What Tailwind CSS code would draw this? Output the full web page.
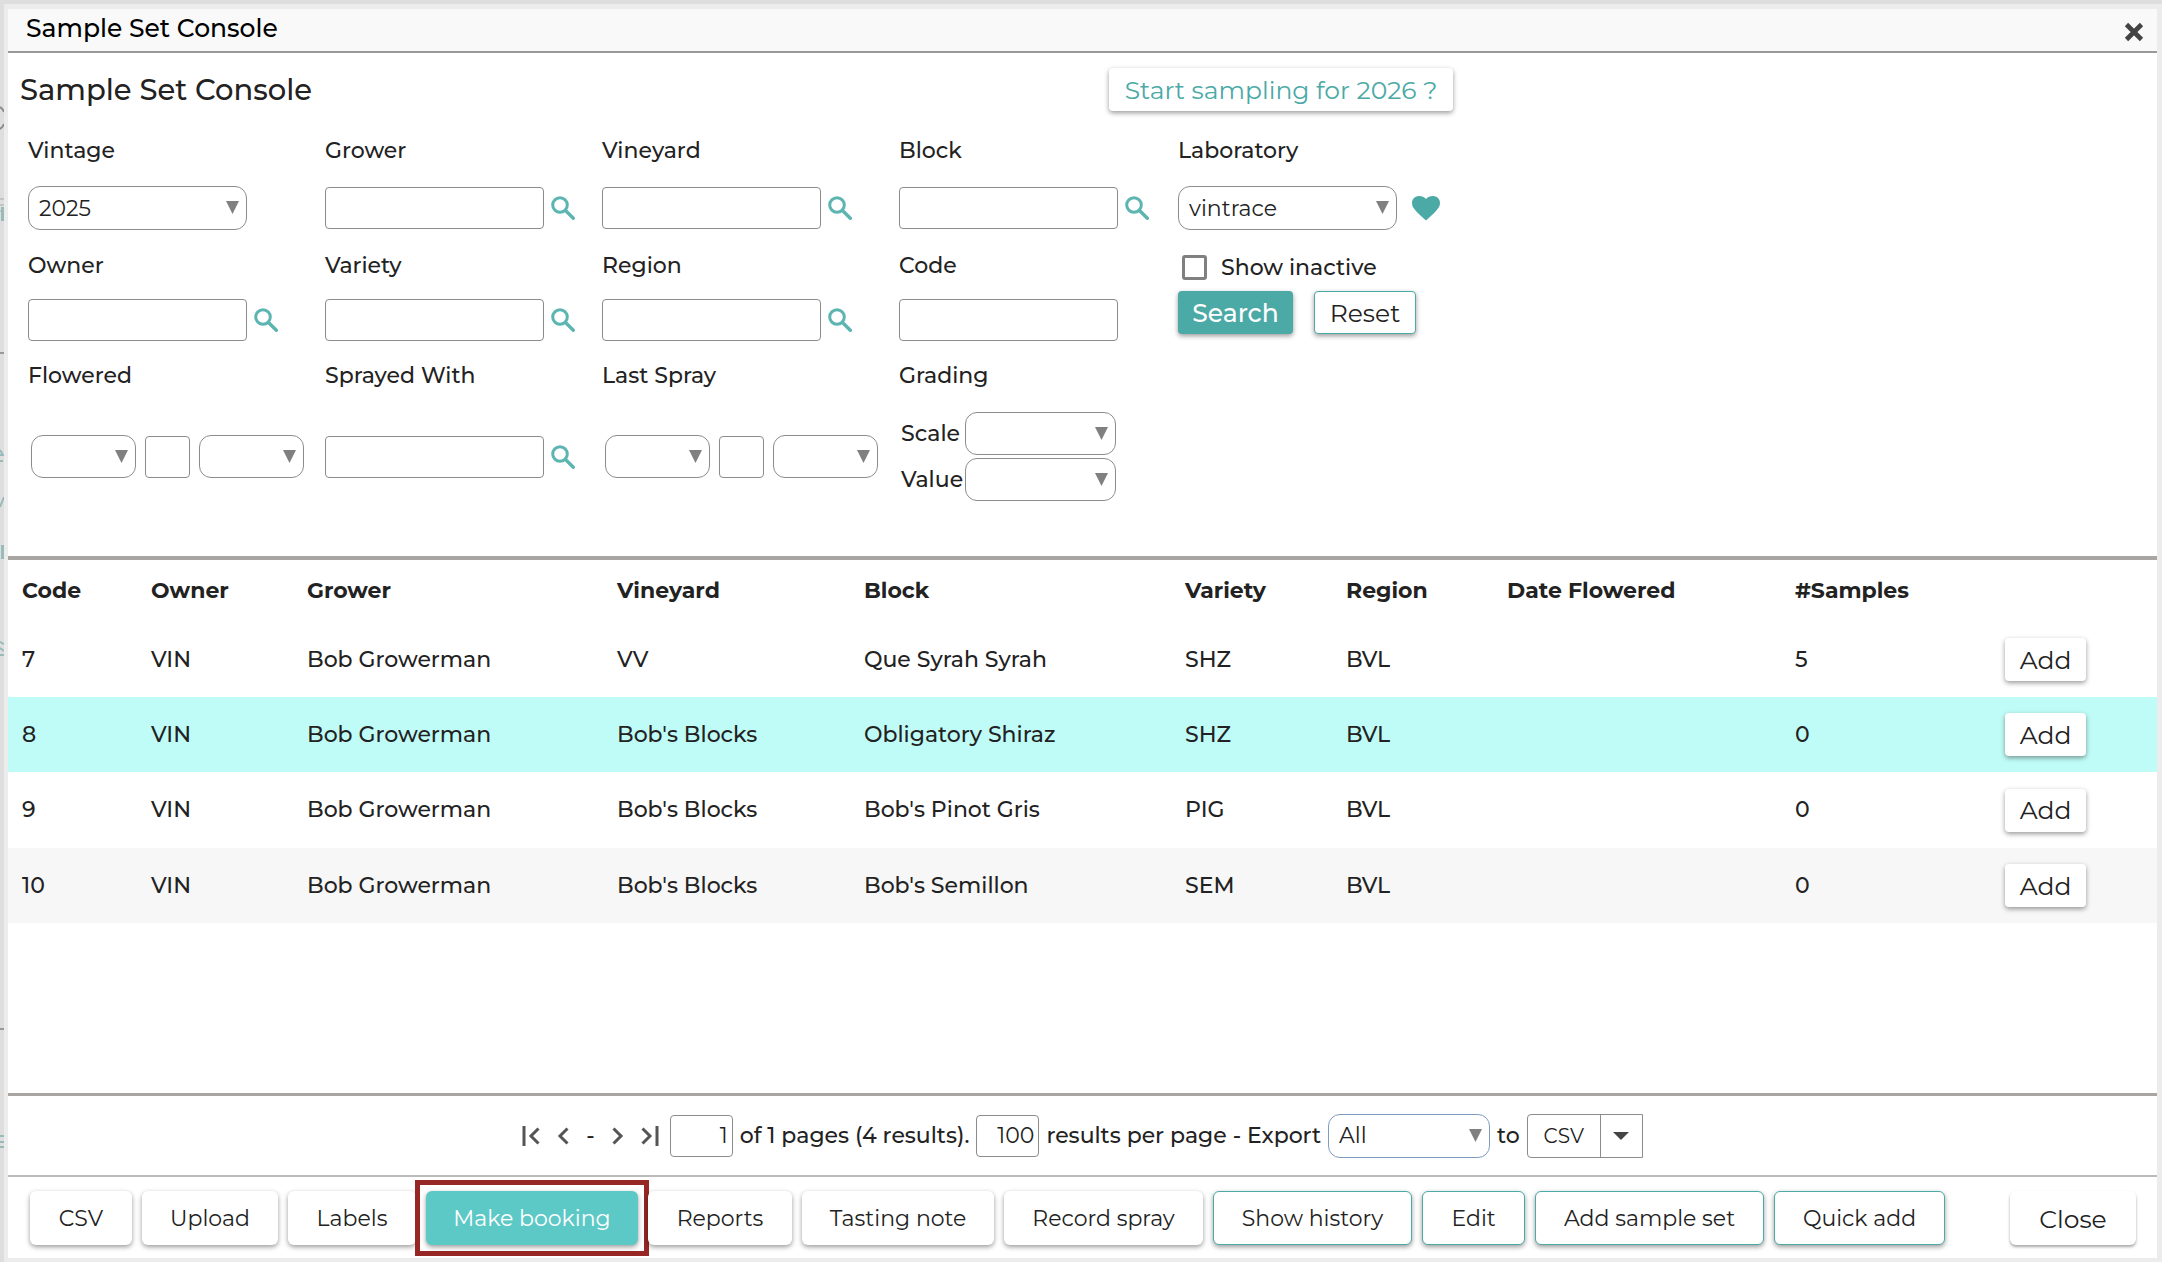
<!DOCTYPE html>
<html lang="en">
<head>
  <meta charset="UTF-8" />
  <meta name="viewport" content="width=device-width, initial-scale=1.0"/>
  <title>Sample Set Console</title>
  <script src="https://cdn.jsdelivr.net/npm/@tailwindcss/browser@4"></script>
</head>
<body class="relative h-screen overflow-hidden bg-[#dedede] font-['Montserrat','Inter',sans-serif] text-[22px] leading-7 font-medium text-[#222]">

  <!-- Shared icons -->
  <svg class="hidden">
    <symbol id="search" viewBox="0 0 24 24">
      <circle cx="9" cy="9" r="7.3" fill="none" stroke="#5cb5b1" stroke-width="3"/>
      <path d="M14.5 14.5L22.3 22.3" stroke="#5cb5b1" stroke-width="3.4" stroke-linecap="round"/>
    </symbol>
    <symbol id="arrow" viewBox="0 0 13 13"><path d="M0 0H13L6.5 13Z" fill="#808080"/></symbol>
  </svg>

  <!-- Edge of the page behind the dialog -->
  <svg class="absolute top-0 left-0 h-[1262px] w-1" viewBox="0 0 4 1262" fill="none" aria-hidden="true">
    <path d="M0 107Q3 109 4 112M0 129Q3 127 4 124" stroke="#8a8a8a" stroke-width="2"/>
    <path d="M0 199H4M0 205H4M0 211H4" stroke="#aaa"/>
    <path d="M0 353H4" stroke="#999" stroke-width="2"/>
    <path d="M0 450L3 455H0M0 461H3M0 507L4 497M0 642L4 644M0 648L4 651M0 655H4M0 1136H4M0 1142H4M0 1147H4" stroke="#98bbb9" stroke-width="2"/>
    <path d="M1 207H4V221H1ZM1 545H4V559H1Z" fill="#98bbb9"/>
    <path d="M0 1029H4" stroke="#999" stroke-width="2"/>
  </svg>

  <!-- Dialog -->
  <div class="flex h-full flex-col border-t-4 border-l-4 border-transparent">
  <div class="flex min-h-0 grow flex-col border-4 border-t-5 border-r-5 border-[#ececec] bg-white">

    <header class="flex h-11 shrink-0 items-center justify-between border-b-2 border-[#999] bg-[#f9f9f9] pr-3 pl-[18px]">
      <span class="pb-1 text-[25px] leading-8 text-black">Sample Set Console</span>
      <button type="button" aria-label="Close dialog" class="mt-1">
        <svg class="size-[22px]" viewBox="0 0 22 22"><path d="M3.500 3.500L18.500 18.500M18.500 3.500L3.500 18.500" stroke="#444" stroke-width="4.600"/></svg>
      </button>
    </header>

    <!-- Filters -->
    <form class="h-[503px] shrink-0 pt-[15px] pl-5">
      <div class="grid grid-cols-[1081px_auto] justify-start">
        <h1 class="-ml-2 text-[29px] leading-[43px]">Sample Set Console</h1>
        <button type="button" class="h-[43px] w-[344px] rounded bg-white text-[25px] font-normal text-[#4ba9a6] shadow-[0_2px_5px_rgba(0,0,0,0.4)]">Start sampling for 2026 ?</button>
      </div>

      <div class="mt-[26px] grid grid-cols-[297px_277px_297px_279px_auto] grid-rows-[115px_110px_140px] justify-start">
        <div>
          <label for="vintage" class="block">Vintage</label>
          <div class="relative mt-[21px] w-[219px]">
            <select id="vintage" class="h-11 w-full appearance-none rounded-xl border border-[#8c8c8c] bg-white px-[10px] pt-px font-normal"><option>2025</option></select>
            <svg class="pointer-events-none absolute top-[15px] right-2 size-[13px]"><use href="#arrow"/></svg>
          </div>
        </div>
        <div>
          <label for="grower" class="block">Grower</label>
          <div class="mt-[21px] flex h-11 items-center gap-[7px]">
            <input id="grower" type="text" class="h-[42px] w-[219px] rounded border border-[#8c8c8c] px-2">
            <button type="button" aria-label="Find grower"><svg class="size-6"><use href="#search"/></svg></button>
          </div>
        </div>
        <div>
          <label for="vineyard" class="block">Vineyard</label>
          <div class="mt-[21px] flex h-11 items-center gap-[7px]">
            <input id="vineyard" type="text" class="h-[42px] w-[219px] rounded border border-[#8c8c8c] px-2">
            <button type="button" aria-label="Find vineyard"><svg class="size-6"><use href="#search"/></svg></button>
          </div>
        </div>
        <div>
          <label for="block" class="block">Block</label>
          <div class="mt-[21px] flex h-11 items-center gap-[7px]">
            <input id="block" type="text" class="h-[42px] w-[219px] rounded border border-[#8c8c8c] px-2">
            <button type="button" aria-label="Find block"><svg class="size-6"><use href="#search"/></svg></button>
          </div>
        </div>
        <div>
          <label for="laboratory" class="block">Laboratory</label>
          <div class="mt-[21px] flex items-center gap-[14px]">
            <div class="relative w-[219px]">
              <select id="laboratory" class="h-11 w-full appearance-none rounded-xl border border-[#8c8c8c] bg-white px-[10px] pt-px font-normal"><option>vintrace</option></select>
              <svg class="pointer-events-none absolute top-[15px] right-2 size-[13px]"><use href="#arrow"/></svg>
            </div>
            <button type="button" aria-label="Favourite laboratory">
              <svg class="h-[26px] w-[30px]" viewBox="0 0 30 26"><path d="M15 25.5L12.8 23.5C5 16.5 1 12.8 1 8.1C1 4 4 1 8 1C11 1 13.5 2 15 4C16.5 2 19 1 22 1C26 1 29 4 29 8.1C29 12.8 25 16.5 17.200 23.500Z" fill="#4ba9a6"/></svg>
            </button>
          </div>
        </div>

        <div>
          <label for="owner" class="block">Owner</label>
          <div class="mt-[18px] flex h-11 items-center gap-[7px]">
            <input id="owner" type="text" class="h-[42px] w-[219px] rounded border border-[#8c8c8c] px-2">
            <button type="button" aria-label="Find owner"><svg class="size-6"><use href="#search"/></svg></button>
          </div>
        </div>
        <div>
          <label for="variety" class="block">Variety</label>
          <div class="mt-[18px] flex h-11 items-center gap-[7px]">
            <input id="variety" type="text" class="h-[42px] w-[219px] rounded border border-[#8c8c8c] px-2">
            <button type="button" aria-label="Find variety"><svg class="size-6"><use href="#search"/></svg></button>
          </div>
        </div>
        <div>
          <label for="region" class="block">Region</label>
          <div class="mt-[18px] flex h-11 items-center gap-[7px]">
            <input id="region" type="text" class="h-[42px] w-[219px] rounded border border-[#8c8c8c] px-2">
            <button type="button" aria-label="Find region"><svg class="size-6"><use href="#search"/></svg></button>
          </div>
        </div>
        <div>
          <label for="code" class="block">Code</label>
          <div class="mt-[18px] flex h-11 items-center">
            <input id="code" type="text" class="h-[42px] w-[219px] rounded border border-[#8c8c8c] px-2">
          </div>
        </div>
        <div>
          <div class="flex h-[31px] items-center gap-[14px] pl-1">
            <input id="inactive" type="checkbox" class="size-[25px] appearance-none rounded-[3px] border-3 border-[#808080] bg-white checked:bg-[#4ba9a6]">
            <label for="inactive">Show inactive</label>
          </div>
          <div class="mt-2 flex gap-[21px] text-[25px]">
            <button type="submit" class="h-[43px] w-[115px] rounded bg-[#4ba9a6] font-medium text-white shadow-[0_2px_5px_rgba(0,0,0,0.4)]">Search</button>
            <button type="reset" class="h-[43px] w-[102px] rounded border border-[#4ba9a6] bg-white font-normal shadow-[0_2px_5px_rgba(0,0,0,0.4)]">Reset</button>
          </div>
        </div>

        <div>
          <label for="flowered-day" class="block">Flowered</label>
          <div class="mt-[22px] ml-[3px] flex h-[89px] items-center gap-[9px]">
            <div class="relative w-[105px]">
              <select id="flowered-day" class="block h-[43px] w-full appearance-none rounded-xl border border-[#8c8c8c] bg-white px-2"><option></option></select>
              <svg class="pointer-events-none absolute top-[15px] right-2 size-[13px]"><use href="#arrow"/></svg>
            </div>
            <input type="text" aria-label="Flowered date" class="h-[42px] w-[45px] rounded border border-[#8c8c8c] px-1">
            <div class="relative w-[105px]">
              <select aria-label="Flowered month" class="block h-[43px] w-full appearance-none rounded-xl border border-[#8c8c8c] bg-white px-2"><option></option></select>
              <svg class="pointer-events-none absolute top-[15px] right-2 size-[13px]"><use href="#arrow"/></svg>
            </div>
          </div>
        </div>
        <div>
          <label for="sprayed" class="block">Sprayed With</label>
          <div class="mt-[22px] flex h-[89px] items-center gap-[7px]">
            <input id="sprayed" type="text" class="h-[42px] w-[219px] rounded border border-[#8c8c8c] px-2">
            <button type="button" aria-label="Find spray"><svg class="size-6"><use href="#search"/></svg></button>
          </div>
        </div>
        <div>
          <label for="spray-day" class="block">Last Spray</label>
          <div class="mt-[22px] ml-[3px] flex h-[89px] items-center gap-[9px]">
            <div class="relative w-[105px]">
              <select id="spray-day" class="block h-[43px] w-full appearance-none rounded-xl border border-[#8c8c8c] bg-white px-2"><option></option></select>
              <svg class="pointer-events-none absolute top-[15px] right-2 size-[13px]"><use href="#arrow"/></svg>
            </div>
            <input type="text" aria-label="Last spray date" class="h-[42px] w-[45px] rounded border border-[#8c8c8c] px-1">
            <div class="relative w-[105px]">
              <select aria-label="Last spray month" class="block h-[43px] w-full appearance-none rounded-xl border border-[#8c8c8c] bg-white px-2"><option></option></select>
              <svg class="pointer-events-none absolute top-[15px] right-2 size-[13px]"><use href="#arrow"/></svg>
            </div>
          </div>
        </div>
        <div>
          <span class="block">Grading</span>
          <div class="mt-[22px] ml-[2px] grid grid-cols-[64px_151px] items-center gap-y-[3px]">
            <label for="scale">Scale</label>
            <div class="relative">
              <select id="scale" class="block h-[43px] w-full appearance-none rounded-xl border border-[#8c8c8c] bg-white px-2"><option></option></select>
              <svg class="pointer-events-none absolute top-[15px] right-2 size-[13px]"><use href="#arrow"/></svg>
            </div>
            <label for="value">Value</label>
            <div class="relative">
              <select id="value" class="block h-[43px] w-full appearance-none rounded-xl border border-[#8c8c8c] bg-white px-2"><option></option></select>
              <svg class="pointer-events-none absolute top-[15px] right-2 size-[13px]"><use href="#arrow"/></svg>
            </div>
          </div>
        </div>
      </div>
    </form>

    <!-- Results -->
    <div class="min-h-0 grow border-t-4 border-b-3 border-[#a8a5a2]">
      <table class="w-full table-fixed text-left [&_td]:pl-[14px] [&_th]:pl-[14px]">
        <thead>
          <tr class="h-[62px] font-bold">
            <th class="w-[129px]">Code</th>
            <th class="w-[156px]">Owner</th>
            <th class="w-[310px]">Grower</th>
            <th class="w-[247px]">Vineyard</th>
            <th class="w-[321px]">Block</th>
            <th class="w-[161px]">Variety</th>
            <th class="w-[161px]">Region</th>
            <th class="w-[288px]">Date Flowered</th>
            <th class="w-[210px]">#Samples</th>
            <td></td>
          </tr>
        </thead>
        <tbody>
          <tr class="h-[75px]">
            <td>7</td><td>VIN</td><td>Bob Growerman</td><td>VV</td><td>Que Syrah Syrah</td><td>SHZ</td><td>BVL</td><td></td><td>5</td>
            <td><button type="button" class="block h-[43px] w-[81px] rounded bg-white text-[25px] font-normal shadow-[0_2px_5px_rgba(0,0,0,0.4)]">Add</button></td>
          </tr>
          <tr class="h-[75px] bg-[#c0fcf7]">
            <td>8</td><td>VIN</td><td>Bob Growerman</td><td>Bob's Blocks</td><td>Obligatory Shiraz</td><td>SHZ</td><td>BVL</td><td></td><td>0</td>
            <td><button type="button" class="block h-[43px] w-[81px] rounded bg-white text-[25px] font-normal shadow-[0_2px_5px_rgba(0,0,0,0.4)]">Add</button></td>
          </tr>
          <tr class="h-[76px]">
            <td>9</td><td>VIN</td><td>Bob Growerman</td><td>Bob's Blocks</td><td>Bob's Pinot Gris</td><td>PIG</td><td>BVL</td><td></td><td>0</td>
            <td><button type="button" class="block h-[43px] w-[81px] rounded bg-white text-[25px] font-normal shadow-[0_2px_5px_rgba(0,0,0,0.4)]">Add</button></td>
          </tr>
          <tr class="h-[75px] bg-[#f7f7f7]">
            <td>10</td><td>VIN</td><td>Bob Growerman</td><td>Bob's Blocks</td><td>Bob's Semillon</td><td>SEM</td><td>BVL</td><td></td><td>0</td>
            <td><button type="button" class="block h-[43px] w-[81px] rounded bg-white text-[25px] font-normal shadow-[0_2px_5px_rgba(0,0,0,0.4)]">Add</button></td>
          </tr>
        </tbody>
      </table>
    </div>

    <!-- Paging -->
    <div class="flex h-[81px] shrink-0 items-center justify-center gap-[7px] border-b-2 border-[#bbb]">
      <div class="mr-1 flex items-center gap-[17px]">
        <button type="button" aria-label="First page"><svg class="h-5 w-[18px]" viewBox="0 0 18 20" fill="none" stroke="#555" stroke-width="3"><path d="M2 0V20M16.500 2.500L9 10L16.500 17.500"/></svg></button>
        <button type="button" aria-label="Previous page"><svg class="h-5 w-3" viewBox="0 0 12 20" fill="none" stroke="#555" stroke-width="3"><path d="M10.500 2.500L3 10L10.500 17.500"/></svg></button>
        <span>-</span>
        <button type="button" aria-label="Next page"><svg class="h-5 w-3" viewBox="0 0 12 20" fill="none" stroke="#555" stroke-width="3"><path d="M1.500 2.500L9 10L1.500 17.500"/></svg></button>
        <button type="button" aria-label="Last page"><svg class="h-5 w-[18px]" viewBox="0 0 18 20" fill="none" stroke="#555" stroke-width="3"><path d="M16 0V20M1.500 2.500L9 10L1.500 17.500"/></svg></button>
      </div>
      <input type="text" aria-label="Page" value="1" class="h-[42px] w-[63px] rounded border border-[#8c8c8c] px-1 text-right font-normal">
      <span>of 1 pages (4 results).</span>
      <input id="per-page" type="text" value="100" class="h-[42px] w-[63px] rounded border border-[#8c8c8c] px-1 text-right font-normal">
      <span><label for="per-page">results per page</label> - <label for="export">Export</label></span>
      <div class="relative w-[162px]">
        <select id="export" class="block h-11 w-full appearance-none rounded-xl border border-[#7f9cc0] bg-white px-[10px] pt-px font-normal"><option>All</option></select>
        <svg class="pointer-events-none absolute top-[15px] right-2 size-[13px]"><use href="#arrow"/></svg>
      </div>
      <span>to</span>
      <div class="flex h-11 w-[116px] rounded-l border border-[#8c8c8c] font-normal">
        <button type="button" class="w-[73px] border-r border-[#8c8c8c] text-xl">CSV</button>
        <button type="button" aria-label="Export format" class="flex grow items-center justify-center"><svg class="h-2 w-4" viewBox="0 0 16 8"><path d="M0 0H16L8 8Z" fill="#444"/></svg></button>
      </div>
    </div>

    <!-- Actions -->
    <footer class="flex h-[81px] shrink-0 items-center gap-[10px] pr-[21px] pl-[22px] font-normal [&_button]:pt-[2px]">
      <button type="button" class="h-[54px] w-[102px] rounded-md bg-white shadow-[0_2px_5px_rgba(0,0,0,0.4)]">CSV</button>
      <button type="button" class="h-[54px] w-[136px] rounded-md bg-white shadow-[0_2px_5px_rgba(0,0,0,0.4)]">Upload</button>
      <button type="button" class="h-[54px] w-[128px] rounded-md bg-white shadow-[0_2px_5px_rgba(0,0,0,0.4)]">Labels</button>
      <div class="-m-[11px] flex border-5 border-[#962725] p-[6px]">
        <button type="button" class="h-[54px] w-[212px] rounded-md bg-[#5dc9c6] text-white shadow-[0_2px_5px_rgba(0,0,0,0.4)]">Make booking</button>
      </div>
      <button type="button" class="h-[54px] w-[144px] rounded-md bg-white shadow-[0_2px_5px_rgba(0,0,0,0.4)]">Reports</button>
      <button type="button" class="h-[54px] w-[192px] rounded-md bg-white shadow-[0_2px_5px_rgba(0,0,0,0.4)]">Tasting note</button>
      <button type="button" class="h-[54px] w-[199px] rounded-md bg-white shadow-[0_2px_5px_rgba(0,0,0,0.4)]">Record spray</button>
      <button type="button" class="h-[54px] w-[199px] rounded-md border border-[#4ba9a6] bg-white shadow-[0_2px_5px_rgba(0,0,0,0.4)]">Show history</button>
      <button type="button" class="h-[54px] w-[103px] rounded-md border border-[#4ba9a6] bg-white shadow-[0_2px_5px_rgba(0,0,0,0.4)]">Edit</button>
      <button type="button" class="h-[54px] w-[229px] rounded-md border border-[#4ba9a6] bg-white shadow-[0_2px_5px_rgba(0,0,0,0.4)]">Add sample set</button>
      <button type="button" class="h-[54px] w-[171px] rounded-md border border-[#4ba9a6] bg-white shadow-[0_2px_5px_rgba(0,0,0,0.4)]">Quick add</button>
      <button type="button" class="ml-auto h-[54px] w-[126px] rounded-md bg-white text-[25px] shadow-[0_2px_3px_rgba(0,0,0,0.35)]">Close</button>
    </footer>
  </div>
  </div>
</body>
</html>
